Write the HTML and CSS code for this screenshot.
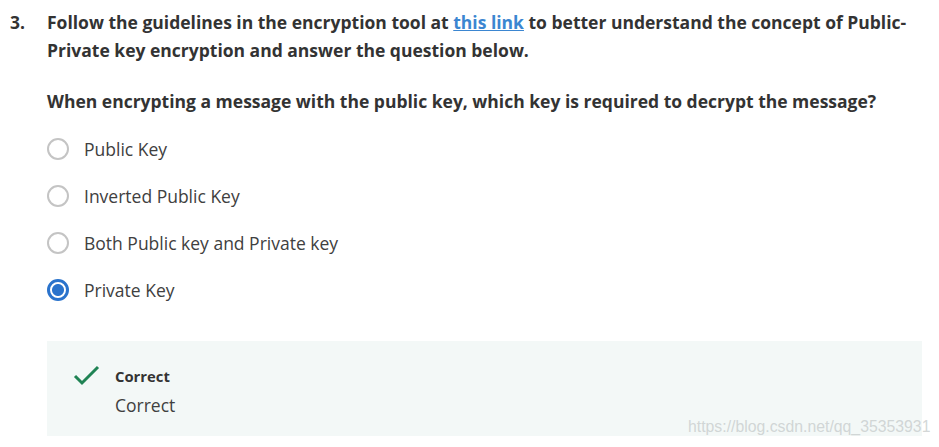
FILE: index.html
```html
<!DOCTYPE html>
<html>
<head>
<meta charset="utf-8">
<link rel="stylesheet" href="styles.css">
</head>
<body>
<div class="question">
  <div class="num">3.</div>
  <div class="content">
    <p class="prompt">Follow the guidelines in the encryption tool at <a href="#">this link</a> to better understand the concept of Public-Private key encryption and answer the question below.</p>
    <p class="prompt q2">When encrypting a message with the public key, which key is required to decrypt the message?</p>
    <div class="options">
      <label class="option"><span class="radio"></span><span class="label">Public Key</span></label>
      <label class="option"><span class="radio"></span><span class="label">Inverted Public Key</span></label>
      <label class="option"><span class="radio"></span><span class="label">Both Public key and Private key</span></label>
      <label class="option"><span class="radio checked"></span><span class="label">Private Key</span></label>
    </div>
    <div class="feedback">
      <svg class="check" width="28" height="22" viewBox="0 0 28 22"><path d="M2 11 L9 18 L25 2" fill="none" stroke="#1f8354" stroke-width="3"/></svg>
      <div class="fb-text">
        <div class="fb-title">Correct</div>
        <div class="fb-body">Correct</div>
      </div>
    </div>
  </div>
</div>
<div class="watermark">https://blog.csdn.net/qq_35353931</div>
</body>
</html>
```
FILE: styles.css
```css
body {
  margin: 0;
  font-family: "Open Sans", sans-serif;
  color: #333;
  background: #fff;
}
.question {
  display: flex;
  padding: 8px 17px 0 10px;
}
.num {
  width: 37px;
  flex: none;
  font-weight: 700;
  font-size: 17.5px;
  line-height: 28px;
}
.content {
  flex: 1;
}
.prompt {
  margin: 0;
  font-weight: 700;
  font-size: 17.5px;
  line-height: 28px;
}
.prompt a {
  color: #3b86d1;
  text-decoration: underline;
}
.q2 {
  margin-top: 23px;
}
.options {
  margin-top: 20px;
  display: flex;
  flex-direction: column;
  gap: 19px;
}
.option {
  display: flex;
  align-items: center;
  height: 28px;
  font-size: 17.5px;
}
.radio {
  width: 18px;
  height: 18px;
  border: 2px solid #c4c4c4;
  border-radius: 50%;
  box-sizing: content-box;
  margin-right: 15px;
  flex: none;
}
.radio.checked {
  border: 3px solid #2a73cc;
  width: 16px;
  height: 16px;
  background: radial-gradient(circle, #2a73cc 0 5.5px, #fff 6.5px);
}
.label {
  color: #404040;
}
.feedback {
  margin-top: 37px;
  background: #f3f8f7;
  height: 95px;
  display: flex;
  padding: 24px 0 0 26px;
  box-sizing: border-box;
}
.check {
  flex: none;
  margin-right: 14px;
  margin-top: 0;
}
.fb-title {
  font-weight: 700;
  font-size: 14.8px;
  line-height: 22px;
}
.fb-body {
  font-size: 17.5px;
  line-height: 28px;
  margin-top: 4px;
  color: #404040;
}
.watermark {
  position: absolute;
  left: 688px;
  top: 418px;
  font-family: "Liberation Sans", Arial, sans-serif;
  font-size: 15.8px;
  color: rgba(200, 205, 205, 0.8);
}
```
